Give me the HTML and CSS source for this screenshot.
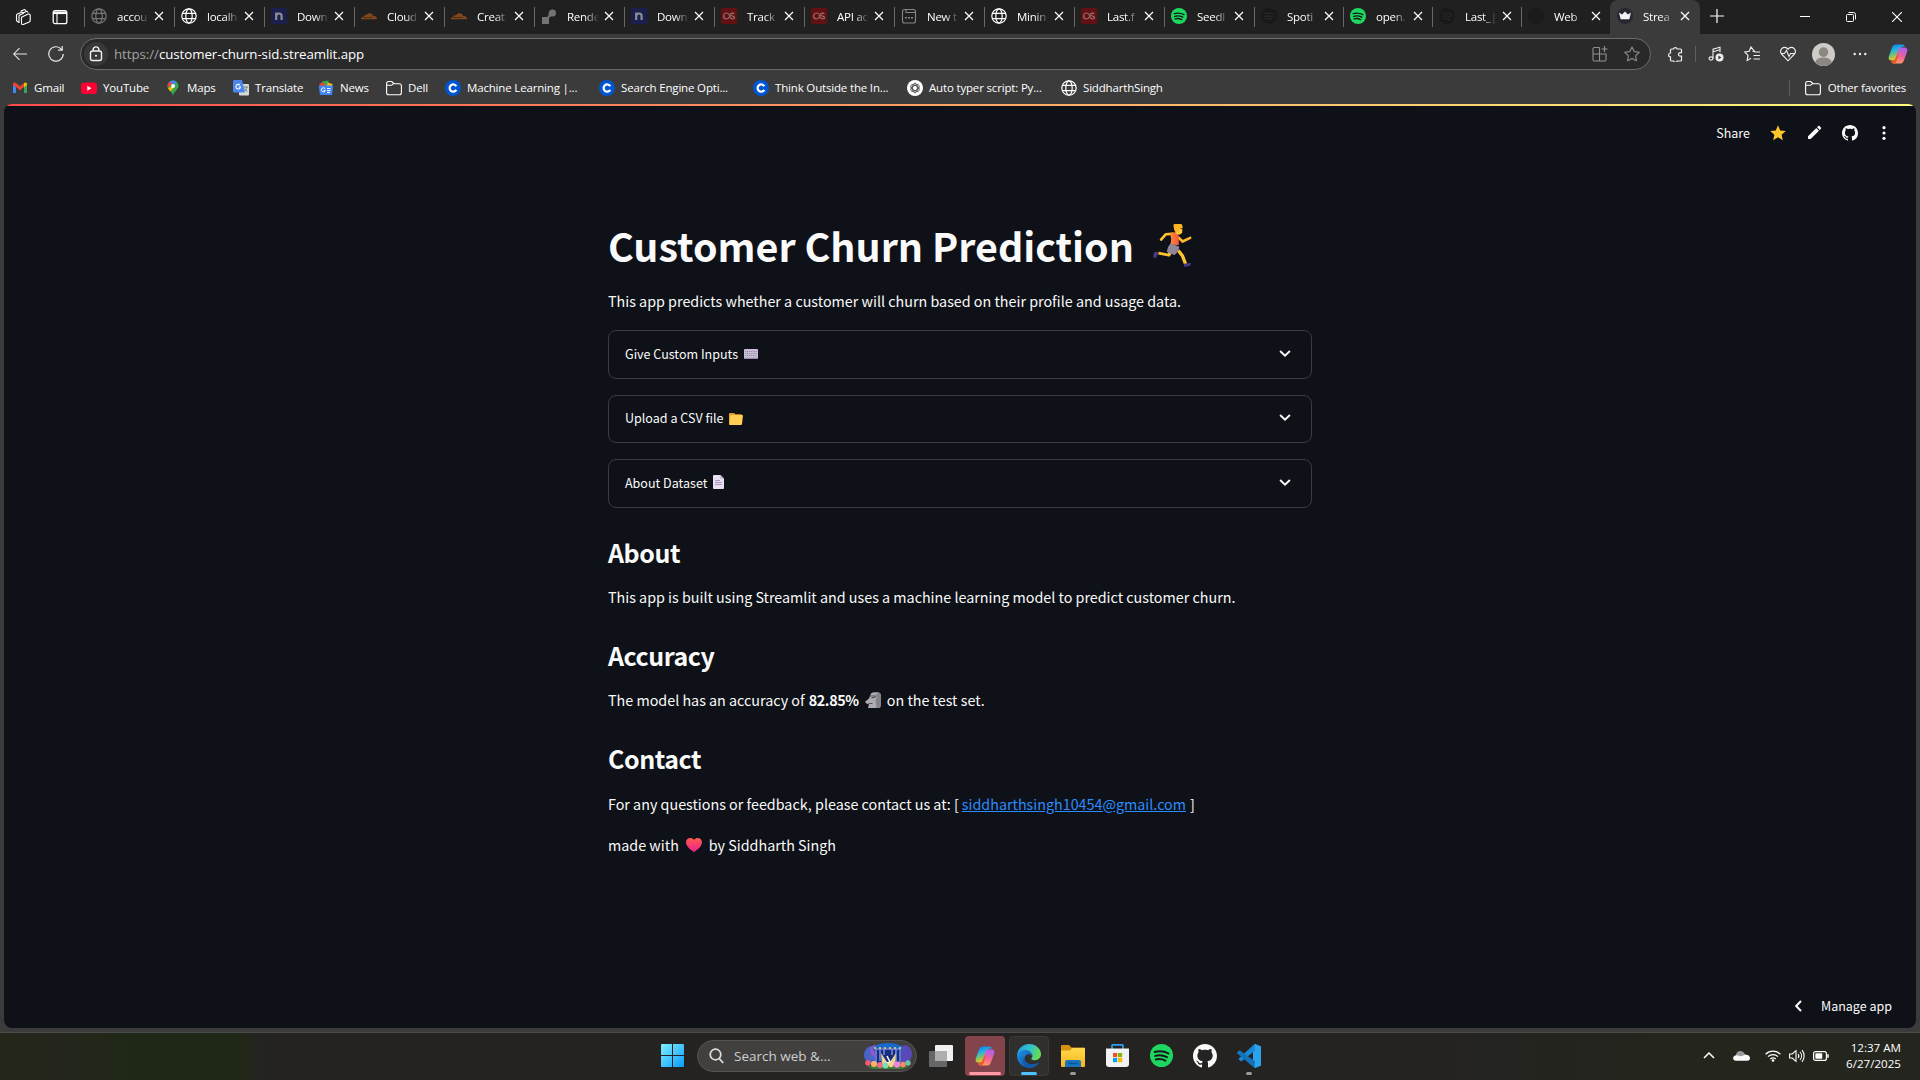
FILE: index.html
```html
<!DOCTYPE html>
<html lang="en">
<head>
<meta charset="utf-8">
<title>Customer Churn Prediction</title>
<link rel="stylesheet" href="styles.css">
</head>
<body>
<svg class="defs" width="0" height="0">
  <defs>
    <linearGradient id="g-win" x1="0" y1="0" x2="1" y2="1"><stop offset="0" stop-color="#7ff0ff"/><stop offset="1" stop-color="#0a9bff"/></linearGradient>
    <linearGradient id="g-cop1" x1="0" y1="0" x2="0.3" y2="1"><stop offset="0" stop-color="#1270e8"/><stop offset=".4" stop-color="#1fb4e4"/><stop offset=".7" stop-color="#7ac46a"/><stop offset="1" stop-color="#f4c61a"/></linearGradient>
    <linearGradient id="g-cop2" x1="0.6" y1="0" x2="0.3" y2="1"><stop offset="0" stop-color="#b060f0"/><stop offset=".5" stop-color="#f0609a"/><stop offset="1" stop-color="#ffa060"/></linearGradient>
    <linearGradient id="g-edge" x1="0" y1="0" x2="1" y2="0.3"><stop offset="0" stop-color="#1f9be0"/><stop offset=".6" stop-color="#35c3c8"/><stop offset="1" stop-color="#62dc58"/></linearGradient>
    <linearGradient id="g-edge2" x1="0" y1="0" x2="1" y2="1"><stop offset="0" stop-color="#1f94e4"/><stop offset="1" stop-color="#0c4a9c"/></linearGradient>
    <linearGradient id="g-fold" x1="0" y1="0" x2="0" y2="1"><stop offset="0" stop-color="#ffd84c"/><stop offset="1" stop-color="#f8b51e"/></linearGradient>
    <linearGradient id="g-heart" x1="0" y1="0" x2="0" y2="1"><stop offset="0" stop-color="#ff5a50"/><stop offset="1" stop-color="#f0208c"/></linearGradient>
    <linearGradient id="g-shirt" x1="0" y1="0" x2="1" y2="0"><stop offset="0" stop-color="#ff8a35"/><stop offset="1" stop-color="#f55a3c"/></linearGradient>
    <symbol id="globe" viewBox="0 0 16 16"><g fill="none" stroke="currentColor" stroke-width="1.2"><circle cx="8" cy="8" r="7.2"/><ellipse cx="8" cy="8" rx="3.2" ry="7.2"/><path d="M1.4 5.4h13.2M1.4 10.6h13.2"/></g></symbol>
    <symbol id="nblue" viewBox="0 0 16 16"><rect width="16" height="16" fill="#1a1f4d"/><path d="M5.2 12V4.6M5.2 7.6c.8-2.8 5.4-2.9 5.4.5V12" fill="none" stroke="#8d8d95" stroke-width="2.2"/></symbol>
    <symbol id="cflare" viewBox="0 0 16 16"><path d="M0 11.200c0-1.600 1-2.500 2.500-2.400C2.800 7.300 4 7 5 7.400 6 4.800 11.500 3.800 12 8c2.500-.3 4 1 4 3.200z" fill="#844719"/><path d="M2 9.600h9.500" stroke="#222" stroke-width=".7"/></symbol>
    <symbol id="rend" viewBox="0 0 16 16"><path d="M1 16V9h4.500c1.500 0 2-1 2-2.500C7.500 3 9 1.500 11.500 1.500a3.500 3.500 0 0 1 0 7c-2.500 0-3.500.5-3.500 2.500v5z" fill="#737373"/></symbol>
    <symbol id="lastfm" viewBox="0 0 16 16"><rect width="16" height="16" rx="2" fill="#631013"/><path d="M8 6.200C7.500 5.300 6.600 5 5.600 5a3 3 0 0 0 0 6c1.500 0 2.200-1 2.600-2.100M13.200 6.100C12.700 4.700 9.500 4.700 9.500 6.500c0 2.100 4 1 4 3 0 2-3.300 1.900-4.300 0L8 6.600" fill="none" stroke="#96706f" stroke-width="1.200"/></symbol>
    <symbol id="newtab" viewBox="0 0 16 16"><g fill="none" stroke="#858585" stroke-width="1.100"><rect x="1.500" y="1.500" width="13" height="13.500" rx="2"/><path d="M5 1.500v3h9.500"/></g><path d="M4 9h2v1.500H4zM7 9h2v1.500H7zM10 9h2v1.500h-2z" fill="#858585"/></symbol>
    <symbol id="spot" viewBox="0 0 16 16"><circle cx="8" cy="8" r="8" fill="#1ed760"/><path d="M3.200 5.600c3.200-.9 6.800-.6 9.700 1M3.600 8.300c2.800-.8 5.800-.4 8.200.9M4 10.800c2.300-.6 4.700-.3 6.700.8" fill="none" stroke="#161616" stroke-width="1.350" stroke-linecap="round"/></symbol>
    <symbol id="spotdim" viewBox="0 0 16 16"><circle cx="8" cy="8" r="8" fill="#191919"/><path d="M3.200 5.600c3.200-.9 6.800-.6 9.700 1M3.600 8.300c2.800-.8 5.800-.4 8.200.9M4 10.800c2.300-.6 4.700-.3 6.700.8" fill="none" stroke="#292626" stroke-width="1.200" stroke-linecap="round"/></symbol>
    <symbol id="dark" viewBox="0 0 16 16"><circle cx="8" cy="8" r="8" fill="#1b1b1b"/></symbol>
    <symbol id="crown" viewBox="0 0 16 16"><circle cx="8" cy="8" r="8" fill="#262730"/><path d="M2 4.500l3 2 3-3 3 3 3-2-1.700 6.800H3.700z" fill="#f3f3f5"/></symbol>
    <symbol id="x" viewBox="0 0 10 10"><path d="M1 1l8 8M9 1l-8 8" stroke="currentColor" stroke-width="1.200" fill="none"/></symbol>
    <symbol id="folder" viewBox="0 0 16 16"><path d="M.6 3.500a2 2 0 0 1 2-2h3.200L8 3.700h5.400a2 2 0 0 1 2 2v7a2 2 0 0 1-2 2H2.600a2 2 0 0 1-2-2zM.6 5.300h5L7.500 3.700" fill="none" stroke="currentColor" stroke-width="1.100"/></symbol>
    <symbol id="cours" viewBox="0 0 16 16"><circle cx="8" cy="8" r="8" fill="#0056d2"/><path d="M11.300 6.200A3.600 3.600 0 1 0 11.300 9.900" fill="none" stroke="#fff" stroke-width="2.200"/></symbol>
    <symbol id="github" viewBox="0 0 16 16"><path fill="currentColor" d="M8 0C3.580 0 0 3.580 0 8c0 3.540 2.290 6.530 5.470 7.590.4.070.55-.17.55-.38 0-.19-.01-.82-.01-1.490-2.010.37-2.530-.49-2.690-.94-.09-.23-.48-.94-.82-1.130-.28-.15-.68-.52-.01-.53.63-.01 1.080.58 1.230.82.72 1.210 1.870.87 2.330.66.070-.52.28-.87.51-1.070-1.780-.2-3.640-.89-3.640-3.950 0-.87.31-1.590.82-2.150-.08-.2-.36-1.020.08-2.120 0 0 .67-.21 2.200.82.64-.18 1.320-.27 2-.27s1.360.09 2 .27c1.530-1.040 2.200-.82 2.200-.82.44 1.100.16 1.920.08 2.120.51.56.82 1.270.82 2.150 0 3.070-1.870 3.750-3.650 3.950.29.25.54.73.54 1.480 0 1.070-.01 1.930-.01 2.200 0 .21.15.46.55.38A8.010 8.010 0 0 0 16 8c0-4.420-3.580-8-8-8z"/></symbol>
    <symbol id="copilot" viewBox="0 0 24 24"><path d="M16.500 2.500H9.500C7.500 2.500 6.500 4 5.800 6.200L3 14c-1 3 .2 4.500 2.500 4.500h3.300c1.800 0 2.600-1.200 3.200-3l2.700-9c.4-1.500 1.200-2 2.600-2l1.500 0c-.5-1.300-1-2-2.300-2z" fill="url(#g-cop1)"/><path d="M7.500 21.500h7c2 0 3-1.500 3.700-3.700L21 10c1-3-.2-4.500-2.500-4.500h-3.300c-1.800 0-2.600 1.200-3.200 3l-2.700 9c-.4 1.500-1.200 2-2.600 2H5.200c.5 1.300 1 2 2.300 2z" fill="url(#g-cop2)"/><path d="M7.500 21.500c2 0 2.800-1 3.300-3l1.600-5.500-.6-1.500-3 6c-.5 1.500-1.200 2-2.500 2H5.200c.4 1.200 1 2 2.300 2z" fill="#f5522f"/></symbol>
    <symbol id="chev" viewBox="0 0 10 6"><path d="M.8.8L5 4.800 9.200.8" fill="none" stroke="currentColor" stroke-width="1.700"/></symbol>
  </defs>
</svg>

<header class="tabbar">
  <svg class="i-work" viewBox="0 0 16 16"><g fill="none" stroke="#fff" stroke-width="1.100"><path d="M1 5.500l5-2.300a1 1 0 0 1 1.400 1M1 5.500v6.300l2.500 1.800M3.500 6.500l5-2.500M3.500 14V6.500M6 8.200l6.700-3.100c1-.4 2 .2 2 1.200v5.100c0 .8-.4 1.200-1 1.500l-6 2.700c-.9.3-1.700-.2-1.700-1z"/><path d="M5 2.300L8.500.8c1-.4 1.700.2 1.700 1.200M7.500 4l3.300-1.500c1-.4 1.700.2 1.700 1.200"/></g></svg>
  <svg class="i-vtab" viewBox="0 0 16 16"><rect x="1.200" y="1.700" width="13.600" height="13" rx="2" fill="none" stroke="#fff" stroke-width="1.300"/><path d="M1.200 2.500h13.600v2.600H1.200z" fill="#fff"/><path d="M5 5v9" stroke="#fff" stroke-width="1.100"/></svg>
  <nav class="tabs">
    <div class="tab"><svg class="fav dim"><use href="#globe"/></svg><span>accou</span><svg class="x"><use href="#x"/></svg></div>
    <div class="tab"><svg class="fav"><use href="#globe"/></svg><span>localh</span><svg class="x"><use href="#x"/></svg></div>
    <div class="tab"><svg class="fav"><use href="#nblue"/></svg><span>Down</span><svg class="x"><use href="#x"/></svg></div>
    <div class="tab"><svg class="fav"><use href="#cflare"/></svg><span>Cloud</span><svg class="x"><use href="#x"/></svg></div>
    <div class="tab"><svg class="fav"><use href="#cflare"/></svg><span>Creat</span><svg class="x"><use href="#x"/></svg></div>
    <div class="tab"><svg class="fav"><use href="#rend"/></svg><span>Rende</span><svg class="x"><use href="#x"/></svg></div>
    <div class="tab"><svg class="fav"><use href="#nblue"/></svg><span>Down</span><svg class="x"><use href="#x"/></svg></div>
    <div class="tab"><svg class="fav"><use href="#lastfm"/></svg><span>Track</span><svg class="x"><use href="#x"/></svg></div>
    <div class="tab"><svg class="fav"><use href="#lastfm"/></svg><span>API ac</span><svg class="x"><use href="#x"/></svg></div>
    <div class="tab"><svg class="fav"><use href="#newtab"/></svg><span>New t</span><svg class="x"><use href="#x"/></svg></div>
    <div class="tab"><svg class="fav"><use href="#globe"/></svg><span>Minin</span><svg class="x"><use href="#x"/></svg></div>
    <div class="tab"><svg class="fav"><use href="#lastfm"/></svg><span>Last.f</span><svg class="x"><use href="#x"/></svg></div>
    <div class="tab"><svg class="fav"><use href="#spot"/></svg><span>Seedl</span><svg class="x"><use href="#x"/></svg></div>
    <div class="tab slim"><svg class="fav"><use href="#spotdim"/></svg><span>Spoti</span><svg class="x"><use href="#x"/></svg></div>
    <div class="tab slim"><svg class="fav"><use href="#spot"/></svg><span>open.</span><svg class="x"><use href="#x"/></svg></div>
    <div class="tab slim"><svg class="fav"><use href="#spotdim"/></svg><span>Last_|</span><svg class="x"><use href="#x"/></svg></div>
    <div class="tab slim"><svg class="fav"><use href="#dark"/></svg><span>Web</span><svg class="x"><use href="#x"/></svg></div>
    <div class="tab active"><svg class="fav"><use href="#crown"/></svg><span>Strea</span><svg class="x"><use href="#x"/></svg></div>
  </nav>
  <svg class="i-plus" viewBox="0 0 14 14"><path d="M7 0v14M0 7h14" stroke="#fff" stroke-width="1.200"/></svg>
  <div class="winctl">
    <svg viewBox="0 0 10 10"><path d="M0 4.500h10" stroke="#fff"/></svg>
    <svg viewBox="0 0 10 10"><g fill="none" stroke="#fff"><rect x=".5" y="2.500" width="7" height="7" rx="1"/><path d="M2.500.5h5a2 2 0 0 1 2 2v5"/></g></svg>
    <svg viewBox="0 0 10 10"><path d="M0 0l10 10M10 0L0 10" stroke="#fff" stroke-width="1.100"/></svg>
  </div>
</header>

<div class="toolbar">
  <svg class="i-back" viewBox="0 0 16 16"><path d="M16 8H.8M7.500 1.200L.8 8l6.700 6.800" fill="none" stroke="#e8e8e8" stroke-width="1.200"/></svg>
  <svg class="i-reload" viewBox="0 0 16 16"><path d="M13.500 3.300A7.200 7.200 0 1 0 15.200 8M14.200 0v4.200H10" fill="none" stroke="#e8e8e8" stroke-width="1.200"/></svg>
  <div class="url">
    <span class="lock"><svg viewBox="0 0 14 16"><g fill="none" stroke="#f2f2f2" stroke-width="1.400"><rect x="1.500" y="5" width="11" height="9.500" rx="2"/><path d="M4.200 5V3.700a2.800 2.800 0 0 1 5.600 0V5"/></g><circle cx="7" cy="9.700" r="1" fill="#fff"/></svg></span>
    <span class="address"><i>https://</i>customer-churn-sid.streamlit.app</span>
    <svg class="i-apps" viewBox="0 0 16 16"><g fill="none" stroke="#919191" stroke-width="1.100"><path d="M7.500 1.500h-5a1.500 1.500 0 0 0-1.500 1.500v10.500A1.500 1.500 0 0 0 2.500 15h10a1.500 1.500 0 0 0 1.500-1.500V8H1M7.500 1.500V15M12.500 0v6M9.500 3h6"/></g></svg>
    <svg class="i-star" viewBox="0 0 16 16"><path d="M8 1l2.200 4.600 5 .7-3.600 3.500.9 5L8 12.400l-4.500 2.400.9-5L.8 6.300l5-.7z" fill="none" stroke="#8c8c8c" stroke-width="1.100" stroke-linejoin="round"/></svg>
  </div>
  <div class="tools">
    <svg viewBox="0 0 16 16"><path d="M4.500 3h2a1.900 1.900 0 0 1 3.700 0h3.300a1 1 0 0 1 1 1v2.600h-1.200a1.800 1.800 0 0 0 0 3.600h1.200V14a1 1 0 0 1-1 1h-3.300a1.900 1.900 0 0 1-3.700 0h-2a1 1 0 0 1-1-1v-3.200a1.900 1.900 0 0 1 0-3.800V4a1 1 0 0 1 1-1z" fill="none" stroke="#eee" stroke-width="1.200"/></svg>
    <b class="vr"></b>
    <svg viewBox="0 0 16 16"><g fill="none" stroke="#eee" stroke-width="1.100"><ellipse cx="3" cy="12.500" rx="2" ry="1.600"/><path d="M5 12.500V3.200l7-2v5M5 5.800l7-2"/></g><circle cx="11.500" cy="11.500" r="4" fill="#eee"/><path d="M10.400 9.500v4l3-2z" fill="#3b3b3b"/></svg>
    <svg viewBox="0 0 16 16"><path d="M8.500 5.500h2L7 1 5.200 5.300.8 6l3.200 3.400-.8 5L7 12.200M10.500 6H16M9.500 9.500H16M9.500 13H16" fill="none" stroke="#eee" stroke-width="1.200"/></svg>
    <svg viewBox="0 0 16 16"><path d="M8 3.200C6.300.8 3.400.9 1.800 2.600.2 4.300.4 6.800 2 8.500L8 14.800l6-6.300c1.600-1.700 1.800-4.200.2-5.900C12.600.9 9.700.8 8 3.200zM1 7.500h3.500l2-3 2.500 6 1.500-3H15" fill="none" stroke="#eee" stroke-width="1.100"/></svg>
    <svg class="avatar" viewBox="0 0 24 24"><circle cx="12" cy="12" r="12" fill="#cfccc8"/><circle cx="12" cy="9.500" r="5" fill="#8b8782"/><path d="M3.500 20.500c0-7 17-7 17 0a12 12 0 0 1-17 0z" fill="#8b8782"/></svg>
    <svg viewBox="0 0 16 16"><g fill="#f0f0f0"><circle cx="2.700" cy="8" r="1.200"/><circle cx="8" cy="8" r="1.200"/><circle cx="13.300" cy="8" r="1.200"/></g></svg>
    <svg class="cop"><use href="#copilot"/></svg>
  </div>
</div>

<div class="bookmarks">
  <div class="bm"><svg viewBox="0 0 16 16"><path d="M1 3.500V13h3V6.500z" fill="#4285f4"/><path d="M15 3.500V13h-3V6.500z" fill="#34a853"/><path d="M1 4.500c0-2 2-2.500 3-1.500l4 3.200L12 3v4l-4 3.200L4 7 1 5z" fill="#ea4335"/><path d="M12 3c1.500-1.200 3-.2 3 1.500V5l-3 2.300z" fill="#fbbc04"/></svg><span>Gmail</span></div>
  <div class="bm"><svg viewBox="0 0 16 16"><rect y="2.500" width="16" height="11.500" rx="3" fill="#ff0033"/><path d="M6.300 5.700v5l4.200-2.500z" fill="#fff"/></svg><span>YouTube</span></div>
  <div class="bm"><svg viewBox="0 0 16 16"><path d="M8 .5A5.500 5.500 0 0 0 2.500 6C2.500 9.500 7 11 8 15.800 9 11 13.500 9.500 13.500 6A5.500 5.500 0 0 0 8 .5z" fill="#34a853"/><path d="M8 .5A5.500 5.500 0 0 0 3.800 2.500L8 6l3.500-4.200A5.500 5.500 0 0 0 8 .5z" fill="#4285f4"/><path d="M3.800 2.500C2.500 4 2.200 6 3 8l5-5.500z" fill="#ea4335"/><path d="M3 8c.6 1.500 1.500 2.300 2.500 3.500L10 6z" fill="#fbbc04"/><circle cx="8" cy="6" r="2" fill="#fff"/></svg><span>Maps</span></div>
  <div class="bm"><svg viewBox="0 0 16 16"><rect x="6" y="4" width="10" height="11.500" rx="1" fill="#d8d8d8"/><path d="M0 1.500A1.500 1.500 0 0 1 1.500 0H9l3 12.500H1.500A1.500 1.500 0 0 1 0 11z" fill="#4a87f0"/><path d="M7 5.200A2.300 2.300 0 1 0 7.500 7H5.500" fill="none" stroke="#fff" stroke-width="1.100"/><path d="M10.500 7h4.500M13.800 7c-.3 2-1.300 3.500-2.500 4.500M11.500 8.500l3 3.200" fill="none" stroke="#607d8b" stroke-width=".9"/></svg><span>Translate</span></div>
  <div class="bm"><svg viewBox="0 0 16 16"><path d="M4 1.500l6.500-1v6H3z" fill="#34a853"/><path d="M1.500 3.500L6 2.500l2 4.500H2z" fill="#ea4335"/><path d="M9.500 2.500l5 1.500L13.500 8H9z" fill="#fbbc04"/><path d="M.8 5.500h14.400l-1 8.500q-.2 1-1.200 1H3q-1 0-1.200-1z" fill="#4285f4"/><path d="M7 8.700a2 2 0 1 0 .3 1.700H5.800M9 8.500h3.500M9 10.500h3.500M9 12.500h3" fill="none" stroke="#fff" stroke-width="1"/></svg><span>News</span></div>
  <div class="bm"><svg><use href="#folder"/></svg><span>Dell</span></div>
  <div class="bm"><svg><use href="#cours"/></svg><span>Machine Learning |...</span></div>
  <div class="bm"><svg><use href="#cours"/></svg><span>Search Engine Opti...</span></div>
  <div class="bm"><svg><use href="#cours"/></svg><span>Think Outside the In...</span></div>
  <div class="bm"><svg viewBox="0 0 16 16"><circle cx="8" cy="8" r="8" fill="#fff"/><g fill="none" stroke="#333" stroke-width=".8"><ellipse cx="8" cy="8" rx="2.400" ry="4.800"/><ellipse cx="8" cy="8" rx="2.400" ry="4.800" transform="rotate(60 8 8)"/><ellipse cx="8" cy="8" rx="2.400" ry="4.800" transform="rotate(120 8 8)"/></g></svg><span>Auto typer script: Py...</span></div>
  <div class="bm"><svg><use href="#globe"/></svg><span>SiddharthSingh</span></div>
  <div class="other"><b class="vr"></b><svg><use href="#folder"/></svg><span>Other favorites</span></div>
</div>

<div class="frame">
  <section class="page">
    <div class="rainbow"></div>
    <div class="actions">
      <span>Share</span>
      <svg viewBox="0 0 16 16"><path d="M8 .3l2.200 5.200 5.600.5-4.200 3.700 1.200 5.500L8 12.300l-4.800 2.900 1.200-5.500L.2 6l5.600-.5z" fill="#ffc72e"/></svg>
      <svg viewBox="0 0 16 16"><path d="M2 11.200L10.300 3 13 5.700 4.700 14H2zM11.100 2.200L12.200 1.100c.4-.4.9-.4 1.200 0l1.500 1.500c.4.400.4.900 0 1.200l-1.100 1.100z" fill="#fafafa"/></svg>
      <svg class="fg"><use href="#github"/></svg>
      <svg class="kebab" viewBox="0 0 16 16"><g fill="#fafafa"><circle cx="8" cy="2.700" r="1.600"/><circle cx="8" cy="8" r="1.600"/><circle cx="8" cy="13.300" r="1.600"/></g></svg>
    </div>
    <main class="content">
      <h1><span>Customer Churn Prediction</span><svg class="runner" viewBox="69 41 117 130"><path d="M127 71L107 72 93 88" fill="none" stroke="#ffc32e" stroke-width="8" stroke-linejoin="round" stroke-linecap="round"/><path d="M146 82l12 12 23-11" fill="none" stroke="#ffb62c" stroke-width="8" stroke-linejoin="round" stroke-linecap="round"/><path d="M126 112l-9 23-32-6" fill="none" stroke="#ffc02c" stroke-width="9" stroke-linejoin="round"/><path d="M145 121l13 17 9 24" fill="none" stroke="#ffc52e" stroke-width="10" stroke-linejoin="round"/><path d="M120 68q12-5 24 2 4 12 2 35l-24-3q4-16-2-34z" fill="url(#g-shirt)"/><path d="M122 99l26 11q0 12-14 25-13-3-24-10 2-16 12-26z" fill="#8f8699"/><path d="M75 124l10 3-7 16h-8q-2-12 5-19zM161 161l22-2q1 6-5 9l-14 3z" fill="#4a3a86"/><path d="M134 55h23v12q-4 7-12 6l-8-3z" fill="#ffc938"/><path d="M130 44q3-4 9-3h15q5 3 4 13h-6l-4 5-3 9q-14-4-13-14z" fill="#ffb51f"/></svg></h1>
      <p class="p1"><span>This app predicts whether a customer will churn based on their profile and usage data.</span></p>
      <div class="expanders">
        <div class="exp"><span>Give Custom Inputs</span><svg class="emo" viewBox="0 0 14 14"><rect y="3" width="14" height="10" rx="1" fill="#c9bfd6"/><path d="M1 5.500h12M1 7.500h12M1 9.500h12" stroke="#92879f" stroke-width=".9" stroke-dasharray="1.200 .7"/><path d="M0 12.300h14" stroke="#8f809c"/></svg><svg class="chev"><use href="#chev"/></svg></div>
        <div class="exp"><span>Upload a CSV file</span><svg class="emo" viewBox="0 0 14 14"><path d="M0 3q0-1 1-1h4l1.500 1.300H12q1 0 1 1V12H0z" fill="#e69c28"/><path d="M1.200 5q.2-1 1.200-1H13q1 0 .9 1L13 13q-.2 1-1 1H1q-1 0-.9-1z" fill="#ffce52"/></svg><svg class="chev"><use href="#chev"/></svg></div>
        <div class="exp"><span>About Dataset</span><svg class="emo" viewBox="0 0 14 14"><path d="M0 1q0-1 1-1h6.500L11 3.600V13q0 1-1 1H1q-1 0-1-1z" fill="#e9dff5"/><path d="M7.500 0L11 3.600H7.500z" fill="#b6a8c8"/><path d="M2 5.500h5M2 7.500h7M2 9.500h7" stroke="#9f92b0" stroke-width=".9"/></svg><svg class="chev"><use href="#chev"/></svg></div>
      </div>
      <h2 class="h-a"><span>About</span></h2>
      <p class="p2"><span>This app is built using Streamlit and uses a machine learning model to predict customer churn.</span></p>
      <h2><span>Accuracy</span></h2>
      <p class="p2"><span>The model has an accuracy of</span><strong>82.85%</strong><svg class="moai" viewBox="0 0 16 16"><path d="M6 1.500Q7 .2 10 .2h3.500Q16 1 16 4v9l-1.200 3H3l1-3.500L.6 11 .3 9.500 4 6.500z" fill="#aeacb2"/><path d="M11.500 2v4L10.500 9l1 7h3.500l1-3V4q0-3-2.500-3.500z" fill="#85838a"/><path d="M5 4h5.500l-.5 1.300-3.500.5M3.500 11.500h4" fill="none" stroke="#55545a" stroke-width="1.200"/></svg><span>on the test set.</span></p>
      <h2><span>Contact</span></h2>
      <p class="p3"><span>For any questions or feedback, please contact us at: [</span><a>siddharthsingh10454@gmail.com</a><span>]</span></p>
      <p class="p4"><span>made with</span><svg class="heart" viewBox="0 0 16 14"><path d="M8 13.900C5 12 0 8.500 0 4.200 0 .2 5.500-1.500 8 2c2.500-3.500 8-1.800 8 2.200 0 4.300-5 7.800-8 9.700z" fill="url(#g-heart)"/></svg><span>by Siddharth Singh</span></p>
    </main>
    <div class="manage"><svg class="left" viewBox="0 0 7 12"><path d="M6 1L1.200 6 6 11" fill="none" stroke="#fafafa" stroke-width="2"/></svg><span>Manage app</span></div>
  </section>
</div>

<footer class="taskbar">
  <div class="apps">
    <svg class="start" viewBox="0 0 23 23"><path d="M0 1q0-1 1-1h10v11H0zM12 0h10q1 0 1 1v10H12zM0 12h11v11H1q-1 0-1-1zM12 12h11v10q0 1-1 1H12z" fill="url(#g-win)"/></svg>
    <div class="search">
      <svg class="mag" viewBox="0 0 15 16"><circle cx="6.500" cy="6.500" r="5.300" fill="none" stroke="#ddd" stroke-width="1.700"/><path d="M10.200 10.500l4 4.500" stroke="#ddd" stroke-width="1.800"/></svg>
      <span>Search web &amp;...</span>
      <svg class="fest" viewBox="0 0 48 26"><ellipse cx="8" cy="12" rx="8" ry="9" fill="#4a63c8"/><ellipse cx="11" cy="8" rx="5" ry="6" fill="#8f56c8"/><ellipse cx="41" cy="11" rx="7" ry="9" fill="#5948b8"/><ellipse cx="24" cy="6" rx="15" ry="6" fill="#176ad0"/><path d="M11 5h26v16H11z" fill="#1b2c78"/><path d="M12 20V6h24v14M16 6v12M20 6v6M28 6v6M32 6v12" fill="none" stroke="#7390e8" stroke-width="1.500"/><path d="M10 5h28" stroke="#ffd36a" stroke-width="1.600" stroke-dasharray="2 3"/><path d="M17 10l6 9h3l6-9-1 12H18z" fill="#e8d69a"/><path d="M23 13l3 6-4 2" fill="none" stroke="#fff" stroke-width="1.500"/><path d="M3 23h42l-6 3H8z" fill="#417a32"/><circle cx="4" cy="20" r="2.800" fill="#f35b70"/><circle cx="10" cy="21" r="3" fill="#ffb565"/><circle cx="16" cy="22" r="3" fill="#ef6d8a"/><circle cx="21.500" cy="22.500" r="3" fill="#7be0b0"/><circle cx="27" cy="21.500" r="2.700" fill="#ffd08a"/><circle cx="33" cy="21.500" r="3.300" fill="#e887dc"/><circle cx="39" cy="21.500" r="2.800" fill="#ff8a6a"/><circle cx="44" cy="20" r="2.700" fill="#69c6a4"/></svg>
    </div>
    <svg class="tview" viewBox="0 0 24 22"><rect x="6" width="18" height="16" rx="1" fill="#f1f1f1"/><rect y="6" width="18" height="16" rx="1" fill="#676767"/><path d="M6 6h12v10H6z" fill="#aeaeae"/></svg>
    <div class="tile rose"><svg class="i26"><use href="#copilot"/></svg><b></b></div>
    <div class="tile on"><svg class="i24" viewBox="0 0 24 24"><path d="M0 12A12 12 0 0 1 12 0c7 0 12 5 12 10 0 4-3 6.200-6 6.200-3.500 0-4.500-1.200-3-2.700 1.200-1.500.5-5-3.500-5C6 8.500 1 10 0 12z" fill="url(#g-edge)"/><path d="M0 12c.5-4 4-6 8-6 5 0 7.500 3 7 6-3-4-8-1-7.500 3.500.4 4 4 7.500 8 7.800A12 12 0 0 1 0 12z" fill="url(#g-edge2)"/><path d="M8 13c-2 6 6 9.500 14.500 5.300C20 22.500 16 24.300 12 24 6 23 4 15 8 13z" fill="#125aaa"/></svg><b></b></div>
    <div class="tile dot"><svg class="i24" viewBox="0 0 24 22"><path d="M0 1q0-1 1-1h7l2.500 2.500H23q1 0 1 1V8H0z" fill="#d6920e"/><path d="M0 5.500h9L11 3h12q1 0 1 1v17q0 1-1 1H1q-1 0-1-1z" fill="url(#g-fold)"/><path d="M4 22v-5q0-2 2-2h12q2 0 2 2v5z" fill="#1675bd"/><path d="M7 18.500h10" stroke="#0a528f" stroke-width="1.400"/></svg><b></b></div>
    <div class="tile"><svg class="i23" viewBox="0 0 23 23"><path d="M6 5V1.800Q6 .8 7 .8h9q1 0 1 1V5" fill="none" stroke="#2ba1ea" stroke-width="1.700"/><path d="M0 4.500h23V20q0 3-3 3H3q-3 0-3-3z" fill="#f2f2f2"/><path d="M7 9h4.200v4.200H7z" fill="#f25022"/><path d="M12 9h4.200v4.200H12z" fill="#7fba00"/><path d="M7 14h4.200v4.200H7z" fill="#00a4ef"/><path d="M12 14h4.200v4.200H12z" fill="#ffb900"/></svg></div>
    <div class="tile"><svg class="i23"><use href="#spot"/></svg></div>
    <div class="tile"><svg class="i24 fg"><use href="#github"/></svg></div>
    <div class="tile dot"><svg class="i24" viewBox="0 0 24 24"><path d="M17.500 0L24 2.500v19L17.500 24 16 18V6z" fill="#27a5ee"/><path d="M17.500 0L2 14.200c-.5.500-.5 1 0 1.500l1.300 1.200c.5.400 1 .4 1.500.1L18 6.800z" fill="#1a86d4"/><path d="M17.500 24L.3 9.500c-.4-.5-.4-1 0-1.500l1.500-1.200c.5-.4 1-.4 1.500 0L18 17.200z" fill="#1472b8"/><path d="M18 0l6 2.500v19L18 24z" fill="#2aa4ec"/></svg><b></b></div>
  </div>
  <div class="tray">
    <svg class="t-up" viewBox="0 0 12 7"><path d="M1 6l5-5 5 5" fill="none" stroke="#fff" stroke-width="1.500"/></svg>
    <svg class="t-cloud" viewBox="0 0 17 11"><path d="M3 5a4.500 4.500 0 0 1 8.500-1.500L14 6 4 9z" fill="#9b9b9b"/><path d="M3 10.800C-1 10.500-.8 5.500 3.500 5.300 6 5 7 7 9 6c5-3 8 0 8 2 0 1.800-1 2.800-2.500 2.800z" fill="#fafafa"/></svg>
    <svg class="t-wifi" viewBox="0 0 16 12"><g fill="none" stroke="#fff" stroke-width="1.200"><path d="M.6 4.200a10.500 10.500 0 0 1 14.800 0M3 6.700a7 7 0 0 1 10 0M5.300 9a4 4 0 0 1 5.400 0"/></g><circle cx="8" cy="10.500" r="1.300" fill="#fff"/></svg>
    <svg class="t-vol" viewBox="0 0 16 14"><g fill="none" stroke="#fff" stroke-width="1.100"><path d="M.6 5v4h2.600l3.800 3.300V1.700L3.200 5zM9 5a3 3 0 0 1 0 4M11 3a6 6 0 0 1 0 8M13 1.200a9 9 0 0 1 0 11.600"/></g></svg>
    <svg class="t-bat" viewBox="0 0 16 10"><rect x=".6" y=".6" width="12.800" height="8.800" rx="2" fill="none" stroke="#fff" stroke-width="1.200"/><rect x="2.300" y="2.300" width="7" height="5.400" rx=".8" fill="#fff"/><path d="M14.500 3.500h1v3h-1z" fill="#fff" stroke="#fff" stroke-width=".5"/></svg>
    <div class="clock"><span>12:37 AM</span><span>6/27/2025</span></div>
  </div>
</footer>
</body>
</html>
```
FILE: styles.css
```css
* { box-sizing: border-box; }
html, body { margin: 0; height: 100%; overflow: hidden; }
body {
  width: 1920px; height: 1080px;
  display: flex; flex-direction: column;
  background: #3b3b3b; color: #fff;
  font-family: "Open Sans", "Noto Sans", sans-serif;
}
svg { display: block; flex: none; }
.defs { position: absolute; }
span, strong, a { white-space: nowrap; }

/* tab strip */
.tabbar { height: 34px; background: #202020; display: flex; align-items: center; }
.i-work { width: 17px; height: 16px; margin-left: 15px; }
.i-vtab { width: 16px; height: 16px; margin-left: 20px; }
.tabs { display: flex; margin-left: 16px; align-self: stretch; }
.tab { width: 90px; padding: 0 8px 2px 7px; display: flex; align-items: center; font-size: 11.5px; background: linear-gradient(#686868, #686868) 0 7px / 1px 20px no-repeat; }
.slim { width: 89px; }
.tab span { width: 32px; margin-left: 10px; letter-spacing: -.25px; -webkit-mask: linear-gradient(90deg, #000 55%, transparent); mask: linear-gradient(90deg, #000 55%, transparent); }
.fav { width: 16px; height: 16px; }
.dim { color: #777; }
.x { width: 10px; height: 10px; margin-left: 5px; }
.active { background: #3b3b3b; border-radius: 8px 8px 0 0; }
.i-plus { width: 14px; height: 14px; margin: 0 0 2px 10px; }
.winctl { margin-left: auto; display: flex; gap: 36px; padding-right: 18px; }
.winctl svg { width: 10px; height: 10px; }

/* toolbar */
.toolbar { height: 40px; display: flex; align-items: center; padding-left: 12px; }
.i-back { width: 16px; height: 14px; }
.i-reload { width: 16px; height: 16px; margin-left: 20px; }
.url { width: 1571px; height: 32px; margin-left: 16px; border: 1px solid #6b6b6b; border-radius: 16px; background: #292929; display: flex; align-items: center; padding: 0 10px 0 3px; }
.lock { width: 24px; height: 24px; border-radius: 12px; background: #383838; display: flex; align-items: center; justify-content: center; }
.lock svg { width: 14px; height: 16px; }
.address { margin-left: 6px; font-size: 13.3px; letter-spacing: -.06px; line-height: 20px; flex: none; }
.address i { font-style: normal; color: #a3a3a3; }
.i-apps { width: 16px; height: 16px; margin-left: auto; }
.i-star { width: 16px; height: 16px; margin-left: 16px; }
.tools { display: flex; align-items: center; margin-left: 16px; }
.tools svg { width: 16px; height: 16px; margin-right: 20px; }
.vr { width: 1px; height: 16px; background: #5e5e5e; }
.tools .vr { margin: 0 12px 0 -8px; }
.tools .avatar { width: 23px; height: 23px; margin: 0 17px 0 -4px; }
.tools .cop { width: 26px; height: 24px; margin: 0 0 0 -3px; }

/* bookmarks */
.bookmarks { height: 30px; display: flex; align-items: center; padding: 0 14px 3px 12px; font-size: 11.5px; letter-spacing: -.17px; }
.bm { display: flex; align-items: center; gap: 6px; flex: none; width: 154px; }
.bm svg, .other svg { width: 16px; height: 16px; }
.bm:nth-child(1) { width: 69px; }
.bm:nth-child(2) { width: 84px; }
.bm:nth-child(3), .bm:nth-child(5) { width: 68px; }
.bm:nth-child(4) { width: 85px; }
.bm:nth-child(6) { width: 59px; }
.other { margin-left: auto; display: flex; align-items: center; gap: 7px; }
.other .vr { margin-right: 8px; }

/* page */
.frame { height: 928px; padding: 0 4px; }
.page { height: 924px; border-radius: 8px; overflow: hidden; background: #0e1117; display: flex; flex-direction: column; color: #fafafa; font-family: "Noto Sans CJK JP", sans-serif; }
.rainbow { height: 2px; flex: none; background: linear-gradient(90deg, #ff4b4b, #fffd80); }
.actions { display: flex; align-items: center; justify-content: flex-end; gap: 20px; height: 54px; padding-right: 24px; font-size: 12.5px; line-height: 20px; }
.actions svg { width: 16px; height: 16px; }
.actions .kebab { margin-left: -2px; }
.fg { color: #fafafa; }
.content { width: 704px; margin: 55px 0 0 604px; font-size: 14.320px; }
h1, h2, p { margin: 0; display: flex; align-items: center; }
h1 { font-size: 39.400px; line-height: 60px; height: 60px; font-weight: 700; }
.runner { width: 39px; height: 43px; margin-left: 19px; }
h2 { font-size: 25px; font-weight: 700; letter-spacing: -.45px; line-height: 34px; height: 34px; }
p { line-height: 24px; height: 24px; }
.p1 { margin-top: 14px; }
.expanders { margin-top: 17px; display: grid; gap: 16px; }
.exp { height: 48.500px; border: 1px solid #3a3c42; border-radius: 8px; padding: 0 20px 2px 16px; display: flex; align-items: center; font-size: 12.540px; }
.emo { width: 14px; height: 14px; margin-left: 6px; }
.chev { width: 12px; height: 7px; margin-left: auto; }
.h-a { margin-top: 27px; }
.p2 { margin: 16px 0 29px; }
a { color: #2a8cff; text-decoration: underline; }
.p2 strong { margin-left: 4px; letter-spacing: -.35px; }
.moai { width: 16px; height: 16px; margin: 0 6px; }
.p3 { margin-top: 17px; }
.p4 { margin-top: 17px; }
.p3 a { margin: 0 4px 0 3px; }
.heart { width: 16px; height: 14px; margin: 0 7px; }
.manage { margin-top: auto; display: flex; align-items: center; justify-content: flex-end; gap: 19px; height: 45px; padding-right: 24px; font-size: 12.5px; }
.left { width: 7px; height: 12px; }

/* taskbar */
.taskbar { height: 48px; padding-bottom: 2px; border-top: 1px solid #4b4b4b; background: linear-gradient(90deg, #24261a 0, #24261d 60px, #1f2816 130px, #1f2816 240px, #242321 265px, #242321 75%, #24251c 88%, #24251e); display: flex; align-items: center; justify-content: space-between; }
.apps { display: flex; align-items: center; margin-left: 661px; }
.start { width: 23px; height: 23px; }
.search { width: 220px; height: 32px; margin: 0 12px 0 13px; border-radius: 16px; background: #41403f; border: 1px solid #555453; display: flex; align-items: center; padding: 0 4px 0 11px; font-size: 13.5px; color: #cfcfcf; }
.mag { width: 15px; height: 16px; margin-right: 10px; }
.fest { width: 48px; height: 26px; margin-left: auto; }
.tview { width: 24px; height: 22px; margin-right: 12px; }
.tile { width: 40px; height: 40px; margin-right: 4px; border-radius: 4px; display: flex; align-items: center; justify-content: center; position: relative; }
.tile b { position: absolute; bottom: 1px; height: 3px; border-radius: 2px; }
.rose { background: #84444b; }
.rose b { width: 32px; background: #ff9aa4; }
.on { background: #302f2d; border: 1px solid #3b3a37; }
.on b { width: 16px; background: #4cc2ff; bottom: 0; }
.dot b { width: 6px; background: #9a9a9a; }
.i26 { width: 26px; height: 24px; }
.i24 { width: 24px; height: 24px; }
.i23 { width: 23px; height: 23px; }
.tray { display: flex; align-items: center; padding-right: 19px; font-size: 11.6px; }
.t-up { width: 12px; height: 7px; margin-right: 18px; }
.t-cloud { width: 17px; height: 11px; margin-right: 15px; }
.t-wifi { width: 16px; height: 12px; margin-right: 8px; }
.t-vol { width: 16px; height: 14px; margin-right: 8px; }
.t-bat { width: 16px; height: 10px; }
.clock { display: flex; flex-direction: column; align-items: flex-end; width: 72px; line-height: 16px; }
```
